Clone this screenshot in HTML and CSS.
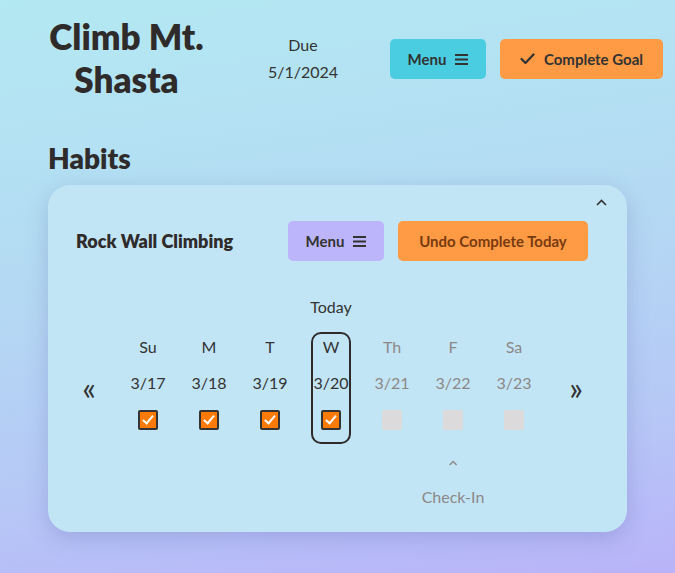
FILE: index.html
```html
<!DOCTYPE html>
<html>
<head>
<meta charset="utf-8">
<link rel="stylesheet" href="styles.css">
</head>
<body>
<div class="page">
  <header class="top">
    <h1 class="title">Climb Mt.<br>Shasta</h1>
    <div class="due"><div>Due</div><div>5/1/2024</div></div>
    <button class="btn btn-cyan">Menu
      <svg class="ico" width="13" height="11" viewBox="0 0 13 11"><path d="M0 1h13M0 5.5h13M0 10h13" stroke="#333" stroke-width="1.8"/></svg>
    </button>
    <button class="btn btn-orange">
      <svg class="ico" width="15" height="12" viewBox="0 0 15 12"><path d="M1.5 6l4 4 8-8.5" fill="none" stroke="#333" stroke-width="2.2" stroke-linecap="round" stroke-linejoin="round"/></svg>
      Complete Goal</button>
  </header>
  <h2 class="habits">Habits</h2>
  <section class="card">
    <svg class="collapse" width="11" height="7" viewBox="0 0 11 7"><path d="M1 6l4.5-4.5L10 6" fill="none" stroke="#333" stroke-width="1.6"/></svg>
    <div class="card-head">
      <h3 class="habit-name">Rock Wall Climbing</h3>
      <button class="btn btn-purple">Menu
        <svg class="ico" width="13" height="11" viewBox="0 0 13 11"><path d="M0 1h13M0 5.5h13M0 10h13" stroke="#333" stroke-width="1.8"/></svg>
      </button>
      <button class="btn btn-undo">Undo Complete Today</button>
    </div>
    <div class="week-wrap">
      <div class="arrow">&laquo;</div>
      <div class="week">
        <div class="col"><span class="dl">Su</span><span class="dt">3/17</span><span class="box done"></span></div>
        <div class="col"><span class="dl">M</span><span class="dt">3/18</span><span class="box done"></span></div>
        <div class="col"><span class="dl">T</span><span class="dt">3/19</span><span class="box done"></span></div>
        <div class="col today"><span class="today-label">Today</span><span class="dl">W</span><span class="dt">3/20</span><span class="box done"></span></div>
        <div class="col future"><span class="dl">Th</span><span class="dt">3/21</span><span class="box"></span></div>
        <div class="col future"><span class="dl">F</span><span class="dt">3/22</span><span class="box"></span>
          <div class="checkin">
            <svg class="caret" width="9" height="6" viewBox="0 0 9 6"><path d="M1 5l3.5-3.5L8 5" fill="none" stroke="#8d8888" stroke-width="1.4"/></svg>
            <span class="ci-text">Check-In</span>
          </div>
        </div>
        <div class="col future"><span class="dl">Sa</span><span class="dt">3/23</span><span class="box"></span></div>
      </div>
      <div class="arrow">&raquo;</div>
    </div>
  </section>
</div>
</body>
</html>
```
FILE: styles.css
```css
* { box-sizing: border-box; }
html, body { margin: 0; padding: 0; }
body {
  width: 675px;
  height: 573px;
  overflow: hidden;
  font-family: Lato, "Noto Sans", sans-serif;
  color: #333;
  background: linear-gradient(172deg, #b3e9f2 0%, #b4d9f3 45%, #b6c8f6 75%, #b9b3f9 100%);
}
.page { padding: 15px 12px 0 48px; }
.top { display: flex; align-items: flex-start; }
.title {
  margin: 0 0 0 -2px;
  width: 161px;
  font-size: 35px;
  line-height: 43px;
  font-weight: 800;
  text-align: center;
  color: #2f2b2b;
}
.due {
  margin: 16px 0 0 51px;
  width: 90px;
  text-align: center;
  font-size: 16px;
  line-height: 27px;
}
.btn {
  display: inline-flex;
  align-items: center;
  justify-content: center;
  gap: 9px;
  height: 40px;
  border: none;
  border-radius: 5px;
  font-family: inherit;
  font-size: 15px;
  font-weight: 700;
  color: #333;
  padding: 0 16px;
}
.top .btn-cyan { margin: 24px 0 0 42px; width: 96px; background: #4acde0; }
.top .btn-orange { margin: 24px 0 0 14px; width: 163px; background: #ff9a45; }
.ico { display: block; }
.habits {
  margin: 40px 0 0;
  font-size: 28px;
  line-height: 34px;
  font-weight: 800;
  color: #2f2b2b;
}
.card {
  position: relative;
  margin-top: 10px;
  width: 579px;
  height: 347px;
  background: #c2e5f6;
  border-radius: 22px;
  box-shadow: 0 6px 22px rgba(90, 100, 170, 0.28);
  padding: 36px 0 0 28px;
}
.collapse {
  position: absolute;
  right: 20px;
  top: 14px;
  display: block;
}
.card-head { display: flex; align-items: center; }
.habit-name {
  margin: 0;
  width: 212px;
  font-size: 18px;
  font-weight: 800;
  color: #2f2b2b;
}
.btn-purple { width: 96px; background: #bdb5fb; }
.btn-undo { margin-left: 14px; width: 190px; background: #ff9a45; color: #7a3a10; }
.week-wrap {
  display: flex;
  align-items: center;
  margin-top: 71px;
}
.arrow {
  width: 24px;
  margin-left: 1px;
  font-size: 32px;
  line-height: 30px;
  text-align: center;
  color: #333;
}
.week {
  display: flex;
  gap: 21px;
  margin: 0 29px 0 27px;
}
.col {
  position: relative;
  width: 40px;
  height: 112px;
  display: flex;
  flex-direction: column;
  align-items: center;
  padding-top: 3px;
  font-size: 16px;
  line-height: 20px;
  border: 2px solid transparent;
  border-radius: 10px;
}
.col.today { border-color: #2f2b2b; }
.today-label {
  position: absolute;
  top: -37px;
  left: 50%;
  transform: translateX(-50%);
}
.dt { margin-top: 16px; }
.box {
  margin-top: 17px;
  width: 20px;
  height: 20px;
  background: #dcdada;
  border-radius: 2px;
}
.box.done {
  background: #ff7a00;
  border: 2px solid #333;
  position: relative;
}
.box.done::after {
  content: "";
  position: absolute;
  left: 5px;
  top: 1px;
  width: 4px;
  height: 9px;
  border: solid #fff;
  border-width: 0 2px 2px 0;
  transform: rotate(40deg);
}
.future { color: #8d8888; }
.checkin {
  position: absolute;
  top: 126px;
  left: 50%;
  transform: translateX(-50%);
  display: flex;
  flex-direction: column;
  align-items: center;
  white-space: nowrap;
  color: #8d8888;
}
.caret { display: block; }
.ci-text { margin-top: 21px; }
```
